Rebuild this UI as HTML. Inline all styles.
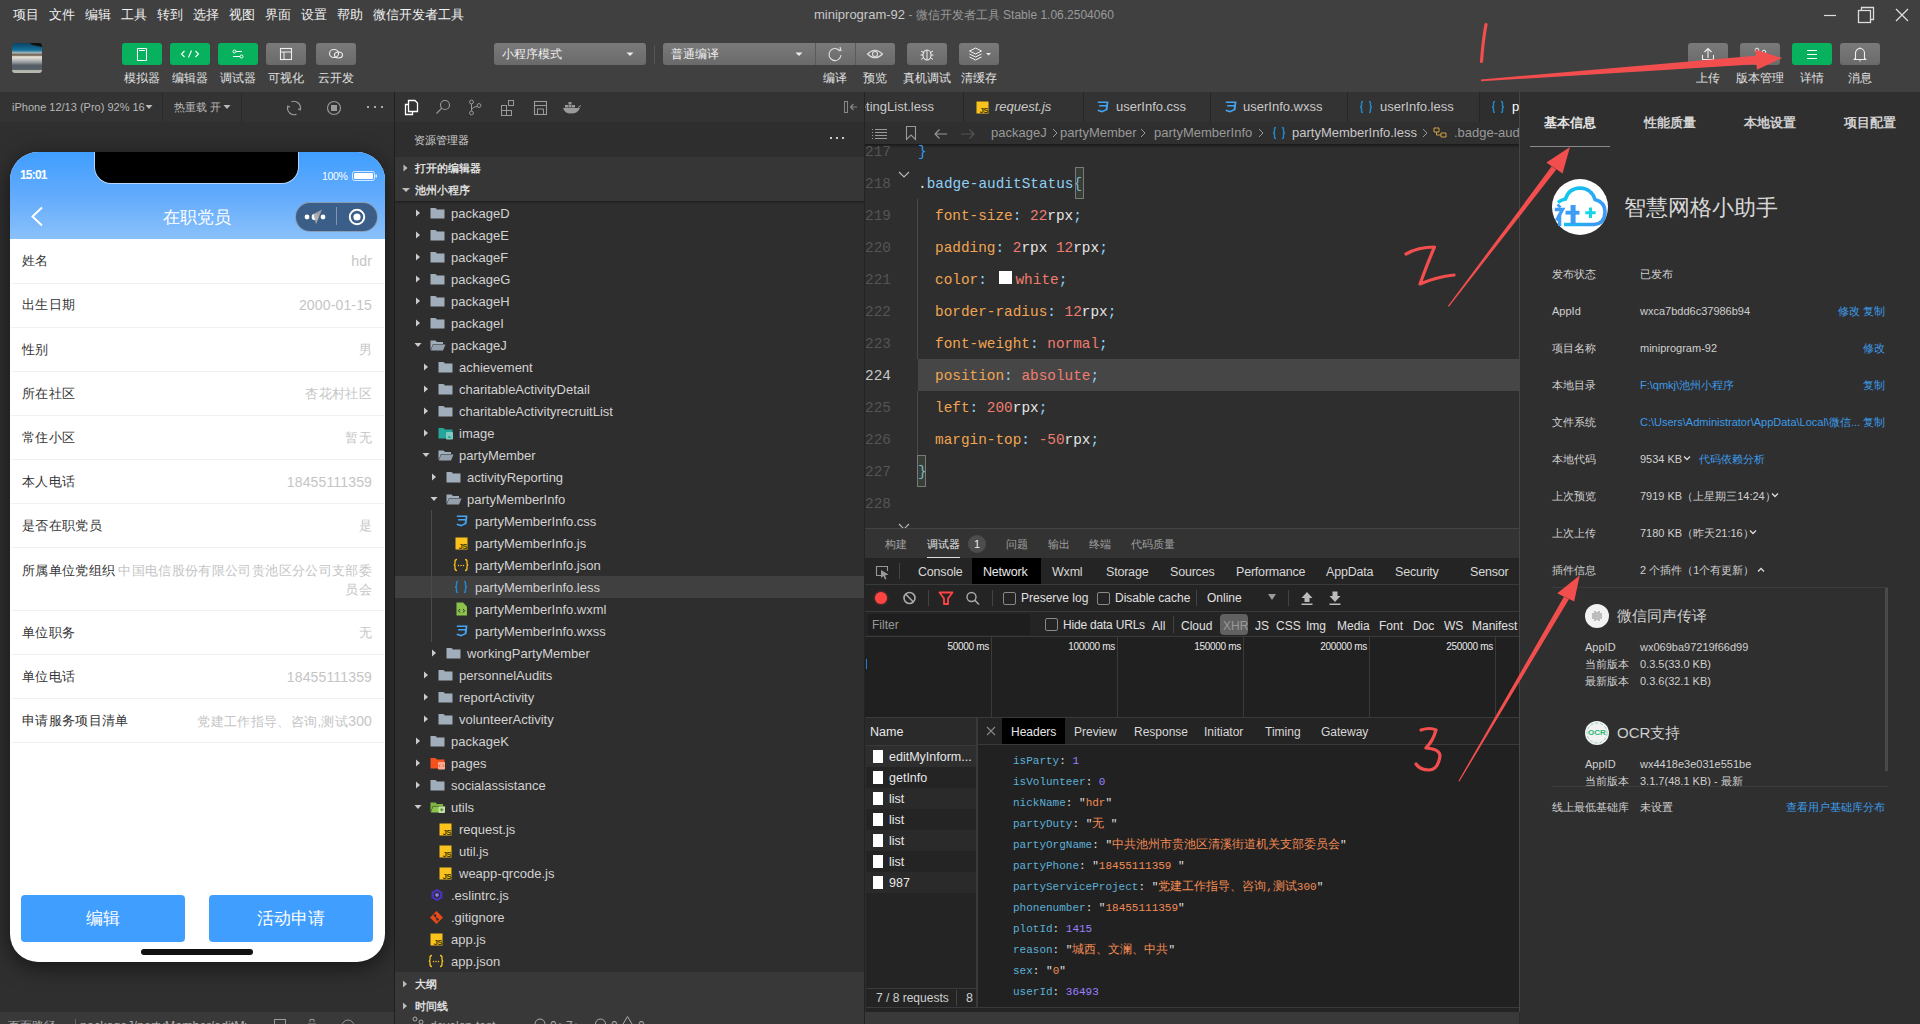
<!DOCTYPE html>
<html><head><meta charset="utf-8"><style>
html,body{margin:0;padding:0;}
body{width:1920px;height:1024px;overflow:hidden;position:relative;background:#2c2c2c;font-family:"Liberation Sans",sans-serif;}
.t{position:absolute;white-space:nowrap;}
.r{position:absolute;}
.m{font-family:"Liberation Mono",monospace;}
</style></head><body>
<div class="r" style="left:0px;top:0px;width:1920px;height:92px;background:#404040;"></div><div class="t " style="left:13px;top:5.0px;font-size:13px;line-height:20px;color:#f0f0f0;">项目</div><div class="t " style="left:49px;top:5.0px;font-size:13px;line-height:20px;color:#f0f0f0;">文件</div><div class="t " style="left:85px;top:5.0px;font-size:13px;line-height:20px;color:#f0f0f0;">编辑</div><div class="t " style="left:121px;top:5.0px;font-size:13px;line-height:20px;color:#f0f0f0;">工具</div><div class="t " style="left:157px;top:5.0px;font-size:13px;line-height:20px;color:#f0f0f0;">转到</div><div class="t " style="left:193px;top:5.0px;font-size:13px;line-height:20px;color:#f0f0f0;">选择</div><div class="t " style="left:229px;top:5.0px;font-size:13px;line-height:20px;color:#f0f0f0;">视图</div><div class="t " style="left:265px;top:5.0px;font-size:13px;line-height:20px;color:#f0f0f0;">界面</div><div class="t " style="left:301px;top:5.0px;font-size:13px;line-height:20px;color:#f0f0f0;">设置</div><div class="t " style="left:337px;top:5.0px;font-size:13px;line-height:20px;color:#f0f0f0;">帮助</div><div class="t " style="left:373px;top:5.0px;font-size:13px;line-height:20px;color:#f0f0f0;">微信开发者工具</div><div class="t " style="left:814px;top:5.0px;font-size:12px;line-height:20px;color:#9a9a9a;font-size:12px;"><span style="color:#c8c8c8;font-size:13px">miniprogram-92</span> - 微信开发者工具 Stable 1.06.2504060</div><svg class="r" style="left:1820px;top:5px;" width="100" height="22" viewBox="0 0 100 22"><line x1="4" y1="10.5" x2="16" y2="10.5" stroke="#ddd" stroke-width="1.2"/><rect x="38.5" y="5.5" width="12" height="12" fill="none" stroke="#ddd" stroke-width="1.3"/><path d="M41.5 5.5V2.5H53.5V14.5H50.5" fill="none" stroke="#ddd" stroke-width="1.3"/><path d="M76 4L88 16M88 4L76 16" stroke="#ddd" stroke-width="1.3"/></svg><div class="r" style="left:12px;top:43px;width:30px;height:30px;border-radius:3px;overflow:hidden;background:linear-gradient(180deg,#0e4262 0%,#14709a 24%,#a8b8bc 33%,#7a6a5a 38%,#7a6a5a 41%,#ebe6d8 46%,#c0c0c0 56%,#8e9296 66%,#555e66 74%,#555e66 88%,#b8bab0 92%,#b8bab0 100%);"><div class="r" style="left:18px;top:-3px;width:16px;height:6px;border-radius:3px;background:#111;transform:rotate(12deg);"></div></div><div class="r" style="left:122px;top:43px;width:40px;height:22px;border-radius:3px;background:#07b15d;"></div><svg class="r" style="left:122px;top:43px;" width="40" height="22" viewBox="0 0 40 22"><rect x="15.5" y="5.5" width="9" height="12" rx="0.5" fill="none" stroke="#fff" stroke-width="1.1"/><line x1="17" y1="7.5" x2="23" y2="7.5" stroke="#fff"/></svg><div class="t " style="left:102px;top:67.5px;font-size:12px;line-height:20px;color:#e0e0e0;width:80px;text-align:center;">模拟器</div><div class="r" style="left:170px;top:43px;width:40px;height:22px;border-radius:3px;background:#07b15d;"></div><svg class="r" style="left:170px;top:43px;" width="40" height="22" viewBox="0 0 40 22"><path d="M14.5 8L11.5 11L14.5 14M25.5 8L28.5 11L25.5 14M21.5 7.5L18.5 14.5" fill="none" stroke="#fff" stroke-width="1.1"/></svg><div class="t " style="left:150px;top:67.5px;font-size:12px;line-height:20px;color:#e0e0e0;width:80px;text-align:center;">编辑器</div><div class="r" style="left:218px;top:43px;width:40px;height:22px;border-radius:3px;background:#07b15d;"></div><svg class="r" style="left:218px;top:43px;" width="40" height="22" viewBox="0 0 40 22"><circle cx="16.5" cy="8.5" r="1.5" fill="none" stroke="#fff"/><line x1="18" y1="8.5" x2="24" y2="8.5" stroke="#fff"/><circle cx="23.5" cy="13.5" r="1.5" fill="none" stroke="#fff"/><line x1="15" y1="13.5" x2="22" y2="13.5" stroke="#fff"/></svg><div class="t " style="left:198px;top:67.5px;font-size:12px;line-height:20px;color:#e0e0e0;width:80px;text-align:center;">调试器</div><div class="r" style="left:266px;top:43px;width:40px;height:22px;border-radius:3px;background:linear-gradient(#7a7a7a,#6a6a6a);"></div><svg class="r" style="left:266px;top:43px;" width="40" height="22" viewBox="0 0 40 22"><rect x="14.5" y="5.5" width="11" height="11" fill="none" stroke="#eee" stroke-width="1.1"/><line x1="14.5" y1="9" x2="25.5" y2="9" stroke="#eee"/><line x1="18" y1="9" x2="18" y2="16.5" stroke="#eee"/></svg><div class="t " style="left:246px;top:67.5px;font-size:12px;line-height:20px;color:#e0e0e0;width:80px;text-align:center;">可视化</div><div class="r" style="left:316px;top:43px;width:40px;height:22px;border-radius:3px;background:linear-gradient(#7a7a7a,#6a6a6a);"></div><svg class="r" style="left:316px;top:43px;" width="40" height="22" viewBox="0 0 40 22"><ellipse cx="18" cy="10.5" rx="4.5" ry="4" fill="none" stroke="#eee" stroke-width="1.1"/><ellipse cx="22.5" cy="12" rx="4" ry="3" fill="none" stroke="#eee" stroke-width="1.1"/></svg><div class="t " style="left:296px;top:67.5px;font-size:12px;line-height:20px;color:#e0e0e0;width:80px;text-align:center;">云开发</div><div class="r" style="left:494px;top:43px;width:152px;height:22px;border-radius:3px;background:linear-gradient(#7a7a7a,#6a6a6a);"></div><div class="t " style="left:502px;top:44.0px;font-size:12px;line-height:20px;color:#eee;">小程序模式</div><svg class="r" style="left:625px;top:50px;" width="10" height="8" viewBox="0 0 10 8"><path d="M1.5 2.5L5 6L8.5 2.5Z" fill="#eee"/></svg><div class="r" style="left:654px;top:45px;width:1px;height:19px;background:#555;"></div><div class="r" style="left:663px;top:43px;width:232px;height:22px;border-radius:3px;background:linear-gradient(#7a7a7a,#6a6a6a);"></div><div class="r" style="left:815px;top:43px;width:1px;height:22px;background:#5a5a5a;"></div><div class="r" style="left:855px;top:43px;width:1px;height:22px;background:#5a5a5a;"></div><div class="t " style="left:671px;top:44.0px;font-size:12px;line-height:20px;color:#eee;">普通编译</div><svg class="r" style="left:794px;top:50px;" width="10" height="8" viewBox="0 0 10 8"><path d="M1.5 2.5L5 6L8.5 2.5Z" fill="#eee"/></svg><svg class="r" style="left:815px;top:43px;" width="40" height="22" viewBox="0 0 40 22"><path d="M25 8.2A6 6 0 1 0 26 12" fill="none" stroke="#ddd" stroke-width="1.1"/><path d="M22.5 6.5L26 7.5L25 4" fill="none" stroke="#ddd" stroke-width="1.1"/></svg><svg class="r" style="left:855px;top:43px;" width="40" height="22" viewBox="0 0 40 22"><path d="M12.5 11Q20 3.5 27.5 11Q20 18.5 12.5 11Z" fill="none" stroke="#ddd" stroke-width="1.1"/><circle cx="20" cy="11" r="2.5" fill="none" stroke="#ddd" stroke-width="1.1"/></svg><div class="r" style="left:907px;top:43px;width:40px;height:22px;border-radius:3px;background:linear-gradient(#7a7a7a,#6a6a6a);"></div><svg class="r" style="left:907px;top:43px;" width="40" height="22" viewBox="0 0 40 22"><ellipse cx="20" cy="12" rx="4" ry="5" fill="none" stroke="#eee" stroke-width="1.1"/><path d="M14 8L16.5 9.5M26 8L23.5 9.5M13.5 12H16M24 12H26.5M14 16.5L16.5 14.5M26 16.5L23.5 14.5M20 7V17" stroke="#eee" stroke-width="1"/></svg><div class="r" style="left:959px;top:43px;width:40px;height:22px;border-radius:3px;background:linear-gradient(#7a7a7a,#6a6a6a);"></div><svg class="r" style="left:959px;top:43px;" width="40" height="22" viewBox="0 0 40 22"><path d="M10.5 8L16.5 5L22.5 8L16.5 11Z" fill="none" stroke="#eee"/><path d="M10.5 11L16.5 14L22.5 11M10.5 14L16.5 17L22.5 14" fill="none" stroke="#eee"/><path d="M27 10L29.5 12.5L32 10Z" fill="#eee"/></svg><div class="t " style="left:795px;top:67.5px;font-size:12px;line-height:20px;color:#e0e0e0;width:80px;text-align:center;">编译</div><div class="t " style="left:835px;top:67.5px;font-size:12px;line-height:20px;color:#e0e0e0;width:80px;text-align:center;">预览</div><div class="t " style="left:887px;top:67.5px;font-size:12px;line-height:20px;color:#e0e0e0;width:80px;text-align:center;">真机调试</div><div class="t " style="left:939px;top:67.5px;font-size:12px;line-height:20px;color:#e0e0e0;width:80px;text-align:center;">清缓存</div><div class="r" style="left:1688px;top:43px;width:40px;height:22px;border-radius:3px;background:linear-gradient(#7a7a7a,#6a6a6a);"></div><svg class="r" style="left:1688px;top:43px;" width="40" height="22" viewBox="0 0 40 22"><path d="M20 15V6M16.5 9L20 5.5L23.5 9" fill="none" stroke="#eee" stroke-width="1.1"/><path d="M14.5 12V16.5H25.5V12" fill="none" stroke="#eee" stroke-width="1.1"/></svg><div class="t " style="left:1668px;top:67.5px;font-size:12px;line-height:20px;color:#e0e0e0;width:80px;text-align:center;">上传</div><div class="r" style="left:1740px;top:43px;width:40px;height:22px;border-radius:3px;background:linear-gradient(#7a7a7a,#6a6a6a);"></div><svg class="r" style="left:1740px;top:43px;" width="40" height="22" viewBox="0 0 40 22"><circle cx="17" cy="7" r="1.8" fill="none" stroke="#eee"/><circle cx="24" cy="9" r="1.8" fill="none" stroke="#eee"/><circle cx="17" cy="15.5" r="1.8" fill="none" stroke="#eee"/><path d="M17 8.8V13.7M17 12.5Q18 10.5 22.5 10" fill="none" stroke="#eee"/></svg><div class="t " style="left:1720px;top:67.5px;font-size:12px;line-height:20px;color:#e0e0e0;width:80px;text-align:center;">版本管理</div><div class="r" style="left:1792px;top:43px;width:40px;height:22px;border-radius:3px;background:#07b15d;"></div><svg class="r" style="left:1792px;top:43px;" width="40" height="22" viewBox="0 0 40 22"><path d="M15 7.5H25M15 11.5H25M15 15.5H25" stroke="#fff" stroke-width="1.1"/></svg><div class="t " style="left:1772px;top:67.5px;font-size:12px;line-height:20px;color:#e0e0e0;width:80px;text-align:center;">详情</div><div class="r" style="left:1840px;top:43px;width:40px;height:22px;border-radius:3px;background:linear-gradient(#7a7a7a,#6a6a6a);"></div><svg class="r" style="left:1840px;top:43px;" width="40" height="22" viewBox="0 0 40 22"><path d="M15.5 15.5V10A4.5 4.5 0 0 1 24.5 10V15.5L26 16.5H14Z" fill="none" stroke="#eee" stroke-width="1.1" stroke-linejoin="round"/><path d="M19.5 18H20.5" stroke="#eee" stroke-width="1.3"/><path d="M20 4.5V5.5" stroke="#eee" stroke-width="1.3"/></svg><div class="t " style="left:1820px;top:67.5px;font-size:12px;line-height:20px;color:#e0e0e0;width:80px;text-align:center;">消息</div><div class="r" style="left:0px;top:92px;width:394px;height:30px;background:#333333;"></div><div class="r" style="left:0px;top:122px;width:394px;height:890px;background:#2f2f2f;"></div><div class="r" style="left:394px;top:92px;width:1px;height:932px;background:#1f1f1f;"></div><div class="t " style="left:12px;top:97.0px;font-size:11px;line-height:20px;color:#b8b8b8;">iPhone 12/13 (Pro) 92% 16</div><svg class="r" style="left:145px;top:104px;" width="8" height="6" viewBox="0 0 8 6"><path d="M0.5 1L4 5L7.5 1Z" fill="#bbb"/></svg><div class="r" style="left:162px;top:92px;width:1px;height:30px;background:#2a2a2a;"></div><div class="t " style="left:174px;top:97.0px;font-size:11px;line-height:20px;color:#b8b8b8;">热重载 开</div><svg class="r" style="left:223px;top:104px;" width="8" height="6" viewBox="0 0 8 6"><path d="M0.5 1L4 5L7.5 1Z" fill="#bbb"/></svg><div class="r" style="left:241px;top:92px;width:1px;height:30px;background:#2a2a2a;"></div><svg class="r" style="left:284px;top:98px;" width="20" height="20" viewBox="0 0 20 20"><path d="M7.5 3.8A6.5 6.5 0 0 1 16.2 11.5M12.5 16.2A6.5 6.5 0 0 1 3.8 8.5" fill="none" stroke="#999" stroke-width="1.2"/><path d="M16.8 9.5L16.2 12L14 10.8" fill="none" stroke="#999" stroke-width="1.1"/><path d="M3.2 10.5L3.8 8L6 9.2" fill="none" stroke="#999" stroke-width="1.1"/></svg><svg class="r" style="left:324px;top:98px;" width="20" height="20" viewBox="0 0 20 20"><circle cx="10" cy="10" r="6.5" fill="none" stroke="#999" stroke-width="1.2"/><rect x="7" y="7" width="6" height="6" fill="#999"/></svg><svg class="r" style="left:364px;top:103px;" width="22" height="8" viewBox="0 0 22 8"><rect x="3" y="3" width="2" height="2" fill="#aaa"/><rect x="10" y="3" width="2" height="2" fill="#aaa"/><rect x="17" y="3" width="2" height="2" fill="#aaa"/></svg><div class="r" style="left:0px;top:1012px;width:394px;height:12px;background:#393939;"></div><div class="t " style="left:8px;top:1016.0px;font-size:12px;line-height:20px;color:#aaa;">页面路径</div><div class="r" style="left:75px;top:1019px;width:1px;height:6px;background:#666;"></div><div class="r" style="left:78px;top:1012px;width:170px;height:12px;overflow:hidden;"><div class="t" style="left:2px;top:4px;font-size:12.5px;line-height:20px;color:#aaa;">packageJ/partyMember/editMyInformation</div></div><div class="r" style="left:10px;top:152px;width:375px;height:810px;border-radius:28px;background:#fff;overflow:hidden;box-shadow:0 5px 22px rgba(0,0,0,0.55);"><div class="r" style="left:0;top:0;width:375px;height:87px;background:linear-gradient(180deg,#409eff 0%,#62abfc 50%,#8ac1fa 100%);"></div><div class="r" style="left:85px;top:-1px;width:203px;height:32px;background:#000;border-radius:0 0 16px 16px;box-shadow:0 0 0 1px rgba(255,255,255,0.55);"></div></div><div class="t " style="left:20px;top:164.5px;font-size:12px;line-height:20px;color:#fff;font-weight:bold;letter-spacing:-0.8px;">15:01</div><div class="t " style="left:322px;top:165.5px;font-size:10.5px;line-height:20px;color:#fff;letter-spacing:-0.3px;">100%</div><svg class="r" style="left:351px;top:170px;" width="28" height="12" viewBox="0 0 28 12"><rect x="1.5" y="1.5" width="22" height="9" rx="2" fill="none" stroke="rgba(255,255,255,0.75)" stroke-width="1"/><rect x="3" y="3" width="19" height="6" rx="1" fill="#fff"/><rect x="24.5" y="4.5" width="1.5" height="3" fill="rgba(255,255,255,0.8)"/></svg><svg class="r" style="left:28px;top:205px;" width="20" height="24" viewBox="0 0 20 24"><path d="M14 2.5L4.5 11.5L14 20.5" fill="none" stroke="#fff" stroke-width="2"/></svg><div class="t " style="left:110px;top:207.5px;font-size:17px;line-height:20px;color:#fff;width:173px;text-align:center;">在职党员</div><div class="r" style="left:294.5px;top:201.5px;width:81px;height:28.5px;border-radius:15px;background:#3a5e87;border:1px solid rgba(200,210,220,0.55);"></div><div class="r" style="left:335.5px;top:207px;width:1px;height:18px;background:rgba(255,255,255,0.35);"></div><svg class="r" style="left:300px;top:208px;" width="36" height="18" viewBox="0 0 36 18"><circle cx="7" cy="9" r="2.4" fill="#fff"/><circle cx="15" cy="9" r="3.3" fill="#fff"/><circle cx="23" cy="9" r="2.4" fill="#fff"/><path d="M22 1.5L13.5 6L16 16.5Z" fill="#a9a9a9" opacity="0.9"/></svg><svg class="r" style="left:347px;top:207px;" width="20" height="20" viewBox="0 0 20 20"><circle cx="10" cy="10" r="7.2" fill="none" stroke="#fff" stroke-width="2"/><circle cx="10" cy="10" r="3.6" fill="#fff"/></svg><div class="t " style="left:22px;top:251.0px;font-size:13.4px;line-height:20px;color:#333;letter-spacing:0.35px;">姓名</div><div class="t " style="right:1548px;top:251.0px;font-size:13.4px;line-height:20px;color:#c5c5c5;letter-spacing:0.35px;"><span style="font-size:14px;letter-spacing:0.15px">h</span><span style="font-size:14px;letter-spacing:0.15px">d</span><span style="font-size:14px;letter-spacing:0.15px">r</span></div><div class="r" style="left:11px;top:283px;width:373px;height:1px;background:#f1f1f1;"></div><div class="t " style="left:22px;top:295.0px;font-size:13.4px;line-height:20px;color:#333;letter-spacing:0.35px;">出生日期</div><div class="t " style="right:1548px;top:295.0px;font-size:13.4px;line-height:20px;color:#c5c5c5;letter-spacing:0.35px;"><span style="font-size:14px;letter-spacing:0.15px">2</span><span style="font-size:14px;letter-spacing:0.15px">0</span><span style="font-size:14px;letter-spacing:0.15px">0</span><span style="font-size:14px;letter-spacing:0.15px">0</span><span style="font-size:14px;letter-spacing:0.15px">-</span><span style="font-size:14px;letter-spacing:0.15px">0</span><span style="font-size:14px;letter-spacing:0.15px">1</span><span style="font-size:14px;letter-spacing:0.15px">-</span><span style="font-size:14px;letter-spacing:0.15px">1</span><span style="font-size:14px;letter-spacing:0.15px">5</span></div><div class="r" style="left:11px;top:327px;width:373px;height:1px;background:#f1f1f1;"></div><div class="t " style="left:22px;top:339.5px;font-size:13.4px;line-height:20px;color:#333;letter-spacing:0.35px;">性别</div><div class="t " style="right:1548px;top:339.5px;font-size:13.4px;line-height:20px;color:#c5c5c5;letter-spacing:0.35px;">男</div><div class="r" style="left:11px;top:371px;width:373px;height:1px;background:#f1f1f1;"></div><div class="t " style="left:22px;top:383.5px;font-size:13.4px;line-height:20px;color:#333;letter-spacing:0.35px;">所在社区</div><div class="t " style="right:1548px;top:383.5px;font-size:13.4px;line-height:20px;color:#c5c5c5;letter-spacing:0.35px;">杏花村社区</div><div class="r" style="left:11px;top:415px;width:373px;height:1px;background:#f1f1f1;"></div><div class="t " style="left:22px;top:427.5px;font-size:13.4px;line-height:20px;color:#333;letter-spacing:0.35px;">常住小区</div><div class="t " style="right:1548px;top:427.5px;font-size:13.4px;line-height:20px;color:#c5c5c5;letter-spacing:0.35px;">暂无</div><div class="r" style="left:11px;top:459px;width:373px;height:1px;background:#f1f1f1;"></div><div class="t " style="left:22px;top:471.5px;font-size:13.4px;line-height:20px;color:#333;letter-spacing:0.35px;">本人电话</div><div class="t " style="right:1548px;top:471.5px;font-size:13.4px;line-height:20px;color:#c5c5c5;letter-spacing:0.35px;"><span style="font-size:14px;letter-spacing:0.15px">1</span><span style="font-size:14px;letter-spacing:0.15px">8</span><span style="font-size:14px;letter-spacing:0.15px">4</span><span style="font-size:14px;letter-spacing:0.15px">5</span><span style="font-size:14px;letter-spacing:0.15px">5</span><span style="font-size:14px;letter-spacing:0.15px">1</span><span style="font-size:14px;letter-spacing:0.15px">1</span><span style="font-size:14px;letter-spacing:0.15px">1</span><span style="font-size:14px;letter-spacing:0.15px">3</span><span style="font-size:14px;letter-spacing:0.15px">5</span><span style="font-size:14px;letter-spacing:0.15px">9</span></div><div class="r" style="left:11px;top:503px;width:373px;height:1px;background:#f1f1f1;"></div><div class="t " style="left:22px;top:515.5px;font-size:13.4px;line-height:20px;color:#333;letter-spacing:0.35px;">是否在职党员</div><div class="t " style="right:1548px;top:515.5px;font-size:13.4px;line-height:20px;color:#c5c5c5;letter-spacing:0.35px;">是</div><div class="r" style="left:11px;top:547px;width:373px;height:1px;background:#f1f1f1;"></div><div class="t " style="left:22px;top:560.5px;font-size:13.4px;line-height:20px;color:#333;letter-spacing:0.35px;">所属单位党组织</div><div class="t " style="right:1548px;top:560.5px;font-size:13.4px;line-height:20px;color:#c5c5c5;letter-spacing:0.35px;">中国电信股份有限公司贵池区分公司支部委</div><div class="t " style="right:1548px;top:579.5px;font-size:13.4px;line-height:20px;color:#c5c5c5;letter-spacing:0.35px;">员会</div><div class="r" style="left:11px;top:610px;width:373px;height:1px;background:#f1f1f1;"></div><div class="t " style="left:22px;top:622.5px;font-size:13.4px;line-height:20px;color:#333;letter-spacing:0.35px;">单位职务</div><div class="t " style="right:1548px;top:622.5px;font-size:13.4px;line-height:20px;color:#c5c5c5;letter-spacing:0.35px;">无</div><div class="r" style="left:11px;top:654px;width:373px;height:1px;background:#f1f1f1;"></div><div class="t " style="left:22px;top:666.5px;font-size:13.4px;line-height:20px;color:#333;letter-spacing:0.35px;">单位电话</div><div class="t " style="right:1548px;top:666.5px;font-size:13.4px;line-height:20px;color:#c5c5c5;letter-spacing:0.35px;"><span style="font-size:14px;letter-spacing:0.15px">1</span><span style="font-size:14px;letter-spacing:0.15px">8</span><span style="font-size:14px;letter-spacing:0.15px">4</span><span style="font-size:14px;letter-spacing:0.15px">5</span><span style="font-size:14px;letter-spacing:0.15px">5</span><span style="font-size:14px;letter-spacing:0.15px">1</span><span style="font-size:14px;letter-spacing:0.15px">1</span><span style="font-size:14px;letter-spacing:0.15px">1</span><span style="font-size:14px;letter-spacing:0.15px">3</span><span style="font-size:14px;letter-spacing:0.15px">5</span><span style="font-size:14px;letter-spacing:0.15px">9</span></div><div class="r" style="left:11px;top:698px;width:373px;height:1px;background:#f1f1f1;"></div><div class="t " style="left:22px;top:710.5px;font-size:13.4px;line-height:20px;color:#333;letter-spacing:0.35px;">申请服务项目清单</div><div class="t " style="right:1548px;top:710.5px;font-size:13.4px;line-height:20px;color:#c5c5c5;letter-spacing:0.35px;">党建工作指导、咨询,测试<span style="font-size:14px;letter-spacing:0.15px">3</span><span style="font-size:14px;letter-spacing:0.15px">0</span><span style="font-size:14px;letter-spacing:0.15px">0</span></div><div class="r" style="left:11px;top:742px;width:373px;height:1px;background:#f1f1f1;"></div><div class="r" style="left:21px;top:895px;width:164px;height:47px;border-radius:4px;background:#409eff;"></div><div class="r" style="left:208.5px;top:895px;width:164px;height:47px;border-radius:4px;background:#409eff;"></div><div class="t " style="left:21px;top:908.5px;font-size:17px;line-height:20px;color:#fff;width:164px;text-align:center;">编辑</div><div class="t " style="left:208.5px;top:908.5px;font-size:17px;line-height:20px;color:#fff;width:164px;text-align:center;">活动申请</div><div class="r" style="left:141px;top:949px;width:112px;height:5.5px;background:#111;border-radius:3px;"></div><div class="r" style="left:395px;top:92px;width:470px;height:30px;background:#333333;"></div><div class="r" style="left:395px;top:122px;width:470px;height:890px;background:#2e2e2e;"></div><div class="r" style="left:864px;top:92px;width:1px;height:932px;background:#232323;"></div><svg class="r" style="left:400px;top:94.5px;" width="190" height="24" viewBox="0 0 190 24"><path d="M8.5 5.5H15L17.5 8V16.5H8.5Z" fill="none" stroke="#fff" stroke-width="1.3"/><path d="M8.5 9.5H5.5V19.5H12.5V16.5" fill="none" stroke="#fff" stroke-width="1.3"/><circle cx="45" cy="10" r="4.5" fill="none" stroke="#9a9a9a" stroke-width="1.1"/><path d="M41.8 13.2L36.5 18.5" stroke="#9a9a9a" stroke-width="1.1"/><circle cx="71.5" cy="7" r="1.9" fill="none" stroke="#9a9a9a"/><circle cx="71.5" cy="18" r="1.9" fill="none" stroke="#9a9a9a"/><circle cx="79" cy="10.5" r="1.9" fill="none" stroke="#9a9a9a"/><path d="M71.5 9V16M71.5 15Q72 12 77.5 11.5" fill="none" stroke="#9a9a9a"/><rect x="101.5" y="10.5" width="5" height="5" fill="none" stroke="#9a9a9a"/><rect x="101.5" y="15.5" width="5" height="5" fill="none" stroke="#9a9a9a"/><rect x="106.5" y="15.5" width="5" height="5" fill="none" stroke="#9a9a9a"/><rect x="108.5" y="5.5" width="5" height="5" fill="none" stroke="#9a9a9a"/><rect x="134.5" y="6.5" width="12" height="13" fill="none" stroke="#9a9a9a" stroke-width="1.1"/><path d="M134.5 10.5H146.5M137.5 13.5V19.5M137.5 14H143.5V19.5" fill="none" stroke="#9a9a9a"/><path d="M163 13H180Q178 18.5 171 18.5Q164.5 18.5 163 13Z" fill="#9a9a9a"/><rect x="165" y="10" width="3" height="2.5" fill="#9a9a9a"/><rect x="168.5" y="10" width="3" height="2.5" fill="#9a9a9a"/><rect x="172" y="10" width="3" height="2.5" fill="#9a9a9a"/><rect x="168.5" y="7" width="3" height="2.5" fill="#9a9a9a"/><path d="M178 12.5L181 10.5" stroke="#9a9a9a"/></svg><svg class="r" style="left:843px;top:98px;" width="16" height="18" viewBox="0 0 16 18"><rect x="1.5" y="3.5" width="3" height="11" fill="none" stroke="#888"/><path d="M14 9H8M10.5 6L7.5 9L10.5 12" fill="none" stroke="#888" stroke-width="1.2"/></svg><div class="t " style="left:414px;top:130.0px;font-size:11px;line-height:20px;color:#d0d0d0;">资源管理器</div><svg class="r" style="left:828px;top:134px;" width="22" height="8" viewBox="0 0 22 8"><rect x="2" y="3" width="2" height="2" fill="#ccc"/><rect x="8" y="3" width="2" height="2" fill="#ccc"/><rect x="14" y="3" width="2" height="2" fill="#ccc"/></svg><div class="r" style="left:395px;top:157px;width:469px;height:44px;background:#363636;"></div><svg class="r" style="left:400px;top:162px;" width="12" height="12" viewBox="0 0 12 12"><path d="M3.5 2.5L7.5 6L3.5 9.5Z" fill="#bbb"/></svg><div class="t " style="left:415px;top:158.0px;font-size:11px;line-height:20px;color:#ddd;font-weight:bold;">打开的编辑器</div><svg class="r" style="left:400px;top:184px;" width="12" height="12" viewBox="0 0 12 12"><path d="M2 4L6 8L10 4Z" fill="#bbb"/></svg><div class="t " style="left:415px;top:179.5px;font-size:11px;line-height:20px;color:#ddd;font-weight:bold;">池州小程序</div><div class="r" style="left:395px;top:201px;width:469px;height:3px;background:linear-gradient(#1e1e1e,rgba(0,0,0,0));"></div><div class="r" style="left:395px;top:576px;width:469px;height:22px;background:#404040;"></div><div class="r" style="left:431px;top:510px;width:1px;height:132px;background:#4a4a4a;"></div><svg class="r" style="left:413px;top:208px" width="10" height="10" viewBox="0 0 10 10"><path d="M3 1.5L7 5L3 8.5Z" fill="#ccc"/></svg><svg class="r" style="left:430px;top:207px" width="16" height="13" viewBox="0 0 16 13"><path d="M0.5 1H5.5L7 2.5H14.5V11.5H0.5Z" fill="#a0aebb"/></svg><div class="t " style="left:451px;top:203.8px;font-size:13px;line-height:20px;color:#d2d2d2;">packageD</div><svg class="r" style="left:413px;top:230px" width="10" height="10" viewBox="0 0 10 10"><path d="M3 1.5L7 5L3 8.5Z" fill="#ccc"/></svg><svg class="r" style="left:430px;top:229px" width="16" height="13" viewBox="0 0 16 13"><path d="M0.5 1H5.5L7 2.5H14.5V11.5H0.5Z" fill="#a0aebb"/></svg><div class="t " style="left:451px;top:225.8px;font-size:13px;line-height:20px;color:#d2d2d2;">packageE</div><svg class="r" style="left:413px;top:252px" width="10" height="10" viewBox="0 0 10 10"><path d="M3 1.5L7 5L3 8.5Z" fill="#ccc"/></svg><svg class="r" style="left:430px;top:251px" width="16" height="13" viewBox="0 0 16 13"><path d="M0.5 1H5.5L7 2.5H14.5V11.5H0.5Z" fill="#a0aebb"/></svg><div class="t " style="left:451px;top:247.8px;font-size:13px;line-height:20px;color:#d2d2d2;">packageF</div><svg class="r" style="left:413px;top:274px" width="10" height="10" viewBox="0 0 10 10"><path d="M3 1.5L7 5L3 8.5Z" fill="#ccc"/></svg><svg class="r" style="left:430px;top:273px" width="16" height="13" viewBox="0 0 16 13"><path d="M0.5 1H5.5L7 2.5H14.5V11.5H0.5Z" fill="#a0aebb"/></svg><div class="t " style="left:451px;top:269.8px;font-size:13px;line-height:20px;color:#d2d2d2;">packageG</div><svg class="r" style="left:413px;top:296px" width="10" height="10" viewBox="0 0 10 10"><path d="M3 1.5L7 5L3 8.5Z" fill="#ccc"/></svg><svg class="r" style="left:430px;top:295px" width="16" height="13" viewBox="0 0 16 13"><path d="M0.5 1H5.5L7 2.5H14.5V11.5H0.5Z" fill="#a0aebb"/></svg><div class="t " style="left:451px;top:291.8px;font-size:13px;line-height:20px;color:#d2d2d2;">packageH</div><svg class="r" style="left:413px;top:318px" width="10" height="10" viewBox="0 0 10 10"><path d="M3 1.5L7 5L3 8.5Z" fill="#ccc"/></svg><svg class="r" style="left:430px;top:317px" width="16" height="13" viewBox="0 0 16 13"><path d="M0.5 1H5.5L7 2.5H14.5V11.5H0.5Z" fill="#a0aebb"/></svg><div class="t " style="left:451px;top:313.8px;font-size:13px;line-height:20px;color:#d2d2d2;">packageI</div><svg class="r" style="left:413px;top:340px" width="10" height="10" viewBox="0 0 10 10"><path d="M1.5 3L5 7L8.5 3Z" fill="#ccc"/></svg><svg class="r" style="left:430px;top:339px" width="16" height="13" viewBox="0 0 16 13"><path d="M0.5 1.5H5.5L7 3H13V5H3L0.5 11Z" fill="#a0aebb"/><path d="M3.2 5.5H15.5L13 11.5H0.8Z" fill="#a0aebb" opacity="0.9"/></svg><div class="t " style="left:451px;top:335.8px;font-size:13px;line-height:20px;color:#d2d2d2;">packageJ</div><svg class="r" style="left:421px;top:362px" width="10" height="10" viewBox="0 0 10 10"><path d="M3 1.5L7 5L3 8.5Z" fill="#ccc"/></svg><svg class="r" style="left:438px;top:361px" width="16" height="13" viewBox="0 0 16 13"><path d="M0.5 1H5.5L7 2.5H14.5V11.5H0.5Z" fill="#a0aebb"/></svg><div class="t " style="left:459px;top:357.8px;font-size:13px;line-height:20px;color:#d2d2d2;">achievement</div><svg class="r" style="left:421px;top:384px" width="10" height="10" viewBox="0 0 10 10"><path d="M3 1.5L7 5L3 8.5Z" fill="#ccc"/></svg><svg class="r" style="left:438px;top:383px" width="16" height="13" viewBox="0 0 16 13"><path d="M0.5 1H5.5L7 2.5H14.5V11.5H0.5Z" fill="#a0aebb"/></svg><div class="t " style="left:459px;top:379.8px;font-size:13px;line-height:20px;color:#d2d2d2;">charitableActivityDetail</div><svg class="r" style="left:421px;top:406px" width="10" height="10" viewBox="0 0 10 10"><path d="M3 1.5L7 5L3 8.5Z" fill="#ccc"/></svg><svg class="r" style="left:438px;top:405px" width="16" height="13" viewBox="0 0 16 13"><path d="M0.5 1H5.5L7 2.5H14.5V11.5H0.5Z" fill="#a0aebb"/></svg><div class="t " style="left:459px;top:401.8px;font-size:13px;line-height:20px;color:#d2d2d2;">charitableActivityrecruitList</div><svg class="r" style="left:421px;top:428px" width="10" height="10" viewBox="0 0 10 10"><path d="M3 1.5L7 5L3 8.5Z" fill="#ccc"/></svg><svg class="r" style="left:438px;top:427px" width="16" height="13" viewBox="0 0 16 13"><path d="M0.5 1H5.5L7 2.5H14.5V11.5H0.5Z" fill="#26a69a"/><rect x="8" y="5" width="7" height="7.5" rx="1" fill="#80cbc4"/><path d="M9.5 11L11 8.5L13.5 11Z" fill="#26a69a"/></svg><div class="t " style="left:459px;top:423.8px;font-size:13px;line-height:20px;color:#d2d2d2;">image</div><svg class="r" style="left:421px;top:450px" width="10" height="10" viewBox="0 0 10 10"><path d="M1.5 3L5 7L8.5 3Z" fill="#ccc"/></svg><svg class="r" style="left:438px;top:449px" width="16" height="13" viewBox="0 0 16 13"><path d="M0.5 1.5H5.5L7 3H13V5H3L0.5 11Z" fill="#a0aebb"/><path d="M3.2 5.5H15.5L13 11.5H0.8Z" fill="#a0aebb" opacity="0.9"/></svg><div class="t " style="left:459px;top:445.8px;font-size:13px;line-height:20px;color:#d2d2d2;">partyMember</div><svg class="r" style="left:429px;top:472px" width="10" height="10" viewBox="0 0 10 10"><path d="M3 1.5L7 5L3 8.5Z" fill="#ccc"/></svg><svg class="r" style="left:446px;top:471px" width="16" height="13" viewBox="0 0 16 13"><path d="M0.5 1H5.5L7 2.5H14.5V11.5H0.5Z" fill="#a0aebb"/></svg><div class="t " style="left:467px;top:467.8px;font-size:13px;line-height:20px;color:#d2d2d2;">activityReporting</div><svg class="r" style="left:429px;top:494px" width="10" height="10" viewBox="0 0 10 10"><path d="M1.5 3L5 7L8.5 3Z" fill="#ccc"/></svg><svg class="r" style="left:446px;top:493px" width="16" height="13" viewBox="0 0 16 13"><path d="M0.5 1.5H5.5L7 3H13V5H3L0.5 11Z" fill="#a0aebb"/><path d="M3.2 5.5H15.5L13 11.5H0.8Z" fill="#a0aebb" opacity="0.9"/></svg><div class="t " style="left:467px;top:489.8px;font-size:13px;line-height:20px;color:#d2d2d2;">partyMemberInfo</div><svg class="r" style="left:455px;top:514px" width="14" height="14" viewBox="0 0 14 14"><path d="M2 1.5H12.5L11.5 10L6 12.5L1.5 11L2 9.5L6 10.8L9.6 9.2L10 6.5H3L3.3 5H10.3L10.6 3H1.7Z" fill="#42a5f5"/></svg><div class="t " style="left:475px;top:511.79999999999995px;font-size:13px;line-height:20px;color:#d2d2d2;">partyMemberInfo.css</div><svg class="r" style="left:455px;top:537px" width="13" height="13" viewBox="0 0 13 13"><rect x="0.5" y="0.5" width="12" height="12" fill="#f9c21c"/><text x="11.8" y="11.6" font-size="7.5" font-family="Liberation Sans" font-weight="bold" text-anchor="end" fill="#3a3000" letter-spacing="-0.6">JS</text></svg><div class="t " style="left:475px;top:533.8px;font-size:13px;line-height:20px;color:#d2d2d2;">partyMemberInfo.js</div><svg class="r" style="left:453px;top:558px" width="16" height="14" viewBox="0 0 16 14"><path d="M4 1.5Q2 1.5 2 3.5V5.5Q2 7 0.8 7Q2 7 2 8.5V10.5Q2 12.5 4 12.5M12 1.5Q14 1.5 14 3.5V5.5Q14 7 15.2 7Q14 7 14 8.5V10.5Q14 12.5 12 12.5" fill="none" stroke="#f9c21c" stroke-width="1.3"/><circle cx="5.5" cy="7.5" r="0.75" fill="#f9c21c"/><circle cx="8" cy="7.5" r="0.75" fill="#f9c21c"/><circle cx="10.5" cy="7.5" r="0.75" fill="#f9c21c"/></svg><div class="t " style="left:475px;top:555.8px;font-size:13px;line-height:20px;color:#d2d2d2;">partyMemberInfo.json</div><svg class="r" style="left:454px;top:580px" width="14" height="14" viewBox="0 0 14 14"><path d="M4 1.5Q2.5 1.5 2.5 3V5.5Q2.5 7 1 7Q2.5 7 2.5 8.5V11Q2.5 12.5 4 12.5M10 1.5Q11.5 1.5 11.5 3V5.5Q11.5 7 13 7Q11.5 7 11.5 8.5V11Q11.5 12.5 10 12.5" fill="none" stroke="#1f8ad2" stroke-width="1.4"/></svg><div class="t " style="left:475px;top:577.8px;font-size:13px;line-height:20px;color:#d2d2d2;">partyMemberInfo.less</div><svg class="r" style="left:455px;top:602px" width="13" height="14" viewBox="0 0 13 14"><path d="M1.5 0.5H8L12 4.5V13.5H1.5Z" fill="#8bc34a"/><path d="M5 7L3.5 8.8L5 10.6M8 7L9.5 8.8L8 10.6" fill="none" stroke="#2c2c2c" stroke-width="1"/></svg><div class="t " style="left:475px;top:599.8px;font-size:13px;line-height:20px;color:#d2d2d2;">partyMemberInfo.wxml</div><svg class="r" style="left:455px;top:624px" width="14" height="14" viewBox="0 0 14 14"><path d="M2 1.5H12.5L11.5 10L6 12.5L1.5 11L2 9.5L6 10.8L9.6 9.2L10 6.5H3L3.3 5H10.3L10.6 3H1.7Z" fill="#42a5f5"/></svg><div class="t " style="left:475px;top:621.8px;font-size:13px;line-height:20px;color:#d2d2d2;">partyMemberInfo.wxss</div><svg class="r" style="left:429px;top:648px" width="10" height="10" viewBox="0 0 10 10"><path d="M3 1.5L7 5L3 8.5Z" fill="#ccc"/></svg><svg class="r" style="left:446px;top:647px" width="16" height="13" viewBox="0 0 16 13"><path d="M0.5 1H5.5L7 2.5H14.5V11.5H0.5Z" fill="#a0aebb"/></svg><div class="t " style="left:467px;top:643.8px;font-size:13px;line-height:20px;color:#d2d2d2;">workingPartyMember</div><svg class="r" style="left:421px;top:670px" width="10" height="10" viewBox="0 0 10 10"><path d="M3 1.5L7 5L3 8.5Z" fill="#ccc"/></svg><svg class="r" style="left:438px;top:669px" width="16" height="13" viewBox="0 0 16 13"><path d="M0.5 1H5.5L7 2.5H14.5V11.5H0.5Z" fill="#a0aebb"/></svg><div class="t " style="left:459px;top:665.8px;font-size:13px;line-height:20px;color:#d2d2d2;">personnelAudits</div><svg class="r" style="left:421px;top:692px" width="10" height="10" viewBox="0 0 10 10"><path d="M3 1.5L7 5L3 8.5Z" fill="#ccc"/></svg><svg class="r" style="left:438px;top:691px" width="16" height="13" viewBox="0 0 16 13"><path d="M0.5 1H5.5L7 2.5H14.5V11.5H0.5Z" fill="#a0aebb"/></svg><div class="t " style="left:459px;top:687.8px;font-size:13px;line-height:20px;color:#d2d2d2;">reportActivity</div><svg class="r" style="left:421px;top:714px" width="10" height="10" viewBox="0 0 10 10"><path d="M3 1.5L7 5L3 8.5Z" fill="#ccc"/></svg><svg class="r" style="left:438px;top:713px" width="16" height="13" viewBox="0 0 16 13"><path d="M0.5 1H5.5L7 2.5H14.5V11.5H0.5Z" fill="#a0aebb"/></svg><div class="t " style="left:459px;top:709.8px;font-size:13px;line-height:20px;color:#d2d2d2;">volunteerActivity</div><svg class="r" style="left:413px;top:736px" width="10" height="10" viewBox="0 0 10 10"><path d="M3 1.5L7 5L3 8.5Z" fill="#ccc"/></svg><svg class="r" style="left:430px;top:735px" width="16" height="13" viewBox="0 0 16 13"><path d="M0.5 1H5.5L7 2.5H14.5V11.5H0.5Z" fill="#a0aebb"/></svg><div class="t " style="left:451px;top:731.8px;font-size:13px;line-height:20px;color:#d2d2d2;">packageK</div><svg class="r" style="left:413px;top:758px" width="10" height="10" viewBox="0 0 10 10"><path d="M3 1.5L7 5L3 8.5Z" fill="#ccc"/></svg><svg class="r" style="left:430px;top:757px" width="16" height="13" viewBox="0 0 16 13"><path d="M0.5 1H5.5L7 2.5H14.5V11.5H0.5Z" fill="#f4511e"/><rect x="8" y="5" width="7" height="7.5" rx="1" fill="#ffab91"/><path d="M10.3 7.3L9 8.7L10.3 10M12.7 7.3L14 8.7L12.7 10" fill="none" stroke="#d84315" stroke-width="0.8"/></svg><div class="t " style="left:451px;top:753.8px;font-size:13px;line-height:20px;color:#d2d2d2;">pages</div><svg class="r" style="left:413px;top:780px" width="10" height="10" viewBox="0 0 10 10"><path d="M3 1.5L7 5L3 8.5Z" fill="#ccc"/></svg><svg class="r" style="left:430px;top:779px" width="16" height="13" viewBox="0 0 16 13"><path d="M0.5 1H5.5L7 2.5H14.5V11.5H0.5Z" fill="#a0aebb"/></svg><div class="t " style="left:451px;top:775.8px;font-size:13px;line-height:20px;color:#d2d2d2;">socialassistance</div><svg class="r" style="left:413px;top:802px" width="10" height="10" viewBox="0 0 10 10"><path d="M1.5 3L5 7L8.5 3Z" fill="#ccc"/></svg><svg class="r" style="left:430px;top:801px" width="16" height="13" viewBox="0 0 16 13"><path d="M0.5 1.5H5.5L7 3H13V5H3L0.5 11Z" fill="#7cb342"/><path d="M3.2 5.5H15.5L13 11.5H0.8Z" fill="#8bc34a"/><rect x="8.5" y="5.5" width="6.5" height="6.5" rx="1" fill="#c5e1a5"/><path d="M11.75 7V10.5M10 8.75H13.5" stroke="#558b2f" stroke-width="1"/></svg><div class="t " style="left:451px;top:797.8px;font-size:13px;line-height:20px;color:#d2d2d2;">utils</div><svg class="r" style="left:439px;top:823px" width="13" height="13" viewBox="0 0 13 13"><rect x="0.5" y="0.5" width="12" height="12" fill="#f9c21c"/><text x="11.8" y="11.6" font-size="7.5" font-family="Liberation Sans" font-weight="bold" text-anchor="end" fill="#3a3000" letter-spacing="-0.6">JS</text></svg><div class="t " style="left:459px;top:819.8px;font-size:13px;line-height:20px;color:#d2d2d2;">request.js</div><svg class="r" style="left:439px;top:845px" width="13" height="13" viewBox="0 0 13 13"><rect x="0.5" y="0.5" width="12" height="12" fill="#f9c21c"/><text x="11.8" y="11.6" font-size="7.5" font-family="Liberation Sans" font-weight="bold" text-anchor="end" fill="#3a3000" letter-spacing="-0.6">JS</text></svg><div class="t " style="left:459px;top:841.8px;font-size:13px;line-height:20px;color:#d2d2d2;">util.js</div><svg class="r" style="left:439px;top:867px" width="13" height="13" viewBox="0 0 13 13"><rect x="0.5" y="0.5" width="12" height="12" fill="#f9c21c"/><text x="11.8" y="11.6" font-size="7.5" font-family="Liberation Sans" font-weight="bold" text-anchor="end" fill="#3a3000" letter-spacing="-0.6">JS</text></svg><div class="t " style="left:459px;top:863.8px;font-size:13px;line-height:20px;color:#d2d2d2;">weapp-qrcode.js</div><svg class="r" style="left:430px;top:888px" width="14" height="14" viewBox="0 0 14 14"><path d="M7 0.8L12.5 4V10L7 13.2L1.5 10V4Z" fill="#4b32c3" opacity="0.9"/><path d="M7 3.5L10 5.2V8.8L7 10.5L4 8.8V5.2Z" fill="#2c2c2c"/><path d="M7 5L8.7 6V8L7 9L5.3 8V6Z" fill="#8080f2"/></svg><div class="t " style="left:451px;top:885.8px;font-size:13px;line-height:20px;color:#d2d2d2;">.eslintrc.js</div><svg class="r" style="left:429px;top:910px" width="15" height="15" viewBox="0 0 15 15"><path d="M7.5 1L14 7.5L7.5 14L1 7.5Z" fill="#e64a19"/><circle cx="6" cy="5.5" r="1.2" fill="#2c2c2c"/><circle cx="8.5" cy="9.5" r="1.2" fill="#2c2c2c"/><path d="M5 4.5L8.5 9.5" stroke="#2c2c2c"/></svg><div class="t " style="left:451px;top:907.8px;font-size:13px;line-height:20px;color:#d2d2d2;">.gitignore</div><svg class="r" style="left:430px;top:933px" width="13" height="13" viewBox="0 0 13 13"><rect x="0.5" y="0.5" width="12" height="12" fill="#f9c21c"/><text x="11.8" y="11.6" font-size="7.5" font-family="Liberation Sans" font-weight="bold" text-anchor="end" fill="#3a3000" letter-spacing="-0.6">JS</text></svg><div class="t " style="left:451px;top:929.8px;font-size:13px;line-height:20px;color:#d2d2d2;">app.js</div><svg class="r" style="left:428px;top:954px" width="16" height="14" viewBox="0 0 16 14"><path d="M4 1.5Q2 1.5 2 3.5V5.5Q2 7 0.8 7Q2 7 2 8.5V10.5Q2 12.5 4 12.5M12 1.5Q14 1.5 14 3.5V5.5Q14 7 15.2 7Q14 7 14 8.5V10.5Q14 12.5 12 12.5" fill="none" stroke="#f9c21c" stroke-width="1.3"/><circle cx="5.5" cy="7.5" r="0.75" fill="#f9c21c"/><circle cx="8" cy="7.5" r="0.75" fill="#f9c21c"/><circle cx="10.5" cy="7.5" r="0.75" fill="#f9c21c"/></svg><div class="t " style="left:451px;top:951.8px;font-size:13px;line-height:20px;color:#d2d2d2;">app.json</div><div class="r" style="left:395px;top:972px;width:469px;height:52px;background:#383838;"></div><svg class="r" style="left:400px;top:979px;" width="10" height="10" viewBox="0 0 10 10"><path d="M3 1.5L7 5L3 8.5Z" fill="#bbb"/></svg><div class="t " style="left:415px;top:974.0px;font-size:11px;line-height:20px;color:#ddd;font-weight:bold;">大纲</div><svg class="r" style="left:400px;top:1001px;" width="10" height="10" viewBox="0 0 10 10"><path d="M3 1.5L7 5L3 8.5Z" fill="#bbb"/></svg><div class="t " style="left:415px;top:996.0px;font-size:11px;line-height:20px;color:#ddd;font-weight:bold;">时间线</div><div class="r" style="left:865px;top:92px;width:654px;height:30px;background:#333333;"></div><div class="r" style="left:865px;top:122px;width:654px;height:22px;background:#2f2f2f;"></div><div class="r" style="left:865px;top:144px;width:654px;height:384px;background:#2e2e2e;"></div><div class="r" style="left:865px;top:144px;width:654px;height:4px;background:linear-gradient(rgba(0,0,0,0.45),rgba(0,0,0,0));"></div><div class="r" style="left:963px;top:92px;width:1px;height:30px;background:#262626;"></div><div class="r" style="left:1083px;top:92px;width:1px;height:30px;background:#262626;"></div><div class="r" style="left:1210px;top:92px;width:1px;height:30px;background:#262626;"></div><div class="r" style="left:1347px;top:92px;width:1px;height:30px;background:#262626;"></div><div class="r" style="left:1479px;top:92px;width:1px;height:30px;background:#262626;"></div><div class="r" style="left:1480px;top:92px;width:39px;height:30px;background:#2e2e2e;"></div><div class="r" style="left:865px;top:92px;width:98px;height:30px;overflow:hidden;"><div class="t" style="right:29px;top:5px;font-size:13px;line-height:20px;color:#c8c8c8;">meetingList.less</div></div><svg class="r" style="left:976px;top:101px" width="13" height="13" viewBox="0 0 13 13"><rect x="0.5" y="0.5" width="12" height="12" fill="#f9c21c"/><text x="11.8" y="11.6" font-size="7.5" font-family="Liberation Sans" font-weight="bold" text-anchor="end" fill="#3a3000" letter-spacing="-0.6">JS</text></svg><div class="t " style="left:995px;top:97.0px;font-size:13px;line-height:20px;color:#c8c8c8;font-style:italic;">request.js</div><svg class="r" style="left:1096px;top:100px" width="14" height="14" viewBox="0 0 14 14"><path d="M2 1.5H12.5L11.5 10L6 12.5L1.5 11L2 9.5L6 10.8L9.6 9.2L10 6.5H3L3.3 5H10.3L10.6 3H1.7Z" fill="#42a5f5"/></svg><div class="t " style="left:1116px;top:97.0px;font-size:13px;line-height:20px;color:#c8c8c8;">userInfo.css</div><svg class="r" style="left:1224px;top:100px" width="14" height="14" viewBox="0 0 14 14"><path d="M2 1.5H12.5L11.5 10L6 12.5L1.5 11L2 9.5L6 10.8L9.6 9.2L10 6.5H3L3.3 5H10.3L10.6 3H1.7Z" fill="#42a5f5"/></svg><div class="t " style="left:1243px;top:97.0px;font-size:13px;line-height:20px;color:#c8c8c8;">userInfo.wxss</div><svg class="r" style="left:1359px;top:100px" width="14" height="14" viewBox="0 0 14 14"><path d="M4 1.5Q2.5 1.5 2.5 3V5.5Q2.5 7 1 7Q2.5 7 2.5 8.5V11Q2.5 12.5 4 12.5M10 1.5Q11.5 1.5 11.5 3V5.5Q11.5 7 13 7Q11.5 7 11.5 8.5V11Q11.5 12.5 10 12.5" fill="none" stroke="#1f8ad2" stroke-width="1.4"/></svg><div class="t " style="left:1380px;top:97.0px;font-size:13px;line-height:20px;color:#c8c8c8;">userInfo.less</div><svg class="r" style="left:1491px;top:100px" width="14" height="14" viewBox="0 0 14 14"><path d="M4 1.5Q2.5 1.5 2.5 3V5.5Q2.5 7 1 7Q2.5 7 2.5 8.5V11Q2.5 12.5 4 12.5M10 1.5Q11.5 1.5 11.5 3V5.5Q11.5 7 13 7Q11.5 7 11.5 8.5V11Q11.5 12.5 10 12.5" fill="none" stroke="#1f8ad2" stroke-width="1.4"/></svg><div class="r" style="left:1508px;top:92px;width:11px;height:30px;overflow:hidden;"><div class="t" style="left:4px;top:5px;font-size:13px;line-height:20px;color:#fff;">partyMemberInfo.less</div></div><svg class="r" style="left:868px;top:124px;" width="120" height="20" viewBox="0 0 120 20"><path d="M7 5.5H19M7 8.5H19M7 11.5H19M7 14.5H19" stroke="#9a9a9a" stroke-width="1"/><path d="M4 5.5H5M4 8.5H5M4 11.5H5M4 14.5H5" stroke="#9a9a9a"/><path d="M38.5 2.5H47.5V15.5L43 11L38.5 15.5Z" fill="none" stroke="#9a9a9a" stroke-width="1.1"/><path d="M67 10H79M71.5 5.5L67 10L71.5 14.5" fill="none" stroke="#9a9a9a" stroke-width="1.1"/><path d="M93 10H106M101.5 5.5L106 10L101.5 14.5" fill="none" stroke="#555" stroke-width="1.1"/></svg><div class="t " style="left:991px;top:123.0px;font-size:13px;line-height:20px;color:#999;">packageJ</div><svg class="r" style="left:1050px;top:127px;" width="10" height="12" viewBox="0 0 10 12"><path d="M3 2L7 6L3 10" fill="none" stroke="#999" stroke-width="1"/></svg><div class="t " style="left:1060px;top:123.0px;font-size:13px;line-height:20px;color:#999;">partyMember</div><svg class="r" style="left:1138px;top:127px;" width="10" height="12" viewBox="0 0 10 12"><path d="M3 2L7 6L3 10" fill="none" stroke="#999" stroke-width="1"/></svg><div class="t " style="left:1154px;top:123.0px;font-size:13px;line-height:20px;color:#999;">partyMemberInfo</div><svg class="r" style="left:1256px;top:127px;" width="10" height="12" viewBox="0 0 10 12"><path d="M3 2L7 6L3 10" fill="none" stroke="#999" stroke-width="1"/></svg><svg class="r" style="left:1272px;top:126px" width="14" height="14" viewBox="0 0 14 14"><path d="M4 1.5Q2.5 1.5 2.5 3V5.5Q2.5 7 1 7Q2.5 7 2.5 8.5V11Q2.5 12.5 4 12.5M10 1.5Q11.5 1.5 11.5 3V5.5Q11.5 7 13 7Q11.5 7 11.5 8.5V11Q11.5 12.5 10 12.5" fill="none" stroke="#1f8ad2" stroke-width="1.4"/></svg><div class="t " style="left:1292px;top:123.0px;font-size:13px;line-height:20px;color:#c8c8c8;">partyMemberInfo.less</div><svg class="r" style="left:1420px;top:127px;" width="10" height="12" viewBox="0 0 10 12"><path d="M3 2L7 6L3 10" fill="none" stroke="#999" stroke-width="1"/></svg><svg class="r" style="left:1432px;top:125px;" width="18" height="16" viewBox="0 0 18 16"><path d="M2 3H7V7H2Z M9 8H14V12H9Z" fill="none" stroke="#d1a045" stroke-width="1"/><path d="M4.5 7V10H9" fill="none" stroke="#d1a045"/></svg><div class="r" style="left:1454px;top:122px;width:65px;height:22px;overflow:hidden;"><div class="t" style="left:0;top:1px;font-size:13px;line-height:20px;color:#999;">.badge-auditStatus</div></div><div class="r" style="left:918px;top:359px;width:601px;height:32px;background:#464646;"></div><div class="t m" style="left:865px;top:142.0px;font-size:14.4px;line-height:20px;color:#545454;">217</div><div class="t m" style="left:865px;top:174.0px;font-size:14.4px;line-height:20px;color:#545454;">218</div><div class="t m" style="left:865px;top:206.0px;font-size:14.4px;line-height:20px;color:#545454;">219</div><div class="t m" style="left:865px;top:238.0px;font-size:14.4px;line-height:20px;color:#545454;">220</div><div class="t m" style="left:865px;top:270.0px;font-size:14.4px;line-height:20px;color:#545454;">221</div><div class="t m" style="left:865px;top:302.0px;font-size:14.4px;line-height:20px;color:#545454;">222</div><div class="t m" style="left:865px;top:334.0px;font-size:14.4px;line-height:20px;color:#545454;">223</div><div class="t m" style="left:865px;top:366.0px;font-size:14.4px;line-height:20px;color:#c8c8c8;">224</div><div class="t m" style="left:865px;top:398.0px;font-size:14.4px;line-height:20px;color:#545454;">225</div><div class="t m" style="left:865px;top:430.0px;font-size:14.4px;line-height:20px;color:#545454;">226</div><div class="t m" style="left:865px;top:462.0px;font-size:14.4px;line-height:20px;color:#545454;">227</div><div class="t m" style="left:865px;top:494.0px;font-size:14.4px;line-height:20px;color:#545454;">228</div><div class="t m" style="left:918px;top:142.0px;font-size:14.4px;line-height:20px;color:#ddd;white-space:pre;"><span style="color:#2f9ef5">}</span></div><svg class="r" style="left:897px;top:170px;" width="14" height="10" viewBox="0 0 14 10"><path d="M2 2L7 7L12 2" fill="none" stroke="#bbb" stroke-width="1.1"/></svg><div class="t m" style="left:918px;top:174.0px;font-size:14.4px;line-height:20px;color:#ddd;white-space:pre;"><span style="color:#ddd">.</span><span style="color:#8fd0f5">badge-auditStatus</span><span style="color:#8fd0f5">{</span></div><div class="r" style="left:1075px;top:167px;width:7px;height:30px;border:1px solid #7a7a7a;background:rgba(80,110,80,0.25);"></div><div class="r" style="left:917px;top:199px;width:1px;height:160px;background:#4a4a4a;"></div><div class="r" style="left:917px;top:391px;width:1px;height:64px;background:#4a4a4a;"></div><div class="t m" style="left:935px;top:206.0px;font-size:14.4px;line-height:20px;color:#ddd;white-space:pre;"><span style="color:#f0a552">font-size</span><span style="color:#8fd4fb">: </span><span style="color:#ef7d6f">22</span><span style="color:#e4e4e4">rpx</span><span style="color:#8fd4fb">;</span></div><div class="t m" style="left:935px;top:238.0px;font-size:14.4px;line-height:20px;color:#ddd;white-space:pre;"><span style="color:#f0a552">padding</span><span style="color:#8fd4fb">: </span><span style="color:#ef7d6f">2</span><span style="color:#e4e4e4">rpx </span><span style="color:#ef7d6f">12</span><span style="color:#e4e4e4">rpx</span><span style="color:#8fd4fb">;</span></div><div class="t m" style="left:935px;top:270.0px;font-size:14.4px;line-height:20px;color:#ddd;white-space:pre;"><span style="color:#f0a552">color</span><span style="color:#8fd4fb">: </span><span style="color:#e4e4e4"><span style="display:inline-block;width:20px"></span></span><span style="color:#ef7d6f">white</span><span style="color:#8fd4fb">;</span></div><div class="r" style="left:999px;top:271px;width:13px;height:13px;background:#fff;"></div><div class="t m" style="left:935px;top:302.0px;font-size:14.4px;line-height:20px;color:#ddd;white-space:pre;"><span style="color:#f0a552">border-radius</span><span style="color:#8fd4fb">: </span><span style="color:#ef7d6f">12</span><span style="color:#e4e4e4">rpx</span><span style="color:#8fd4fb">;</span></div><div class="t m" style="left:935px;top:334.0px;font-size:14.4px;line-height:20px;color:#ddd;white-space:pre;"><span style="color:#f0a552">font-weight</span><span style="color:#8fd4fb">: </span><span style="color:#ef7d6f">normal</span><span style="color:#8fd4fb">;</span></div><div class="t m" style="left:935px;top:366.0px;font-size:14.4px;line-height:20px;color:#ddd;white-space:pre;"><span style="color:#f0a552">position</span><span style="color:#8fd4fb">: </span><span style="color:#ef7d6f">absolute</span><span style="color:#8fd4fb">;</span></div><div class="t m" style="left:935px;top:398.0px;font-size:14.4px;line-height:20px;color:#ddd;white-space:pre;"><span style="color:#f0a552">left</span><span style="color:#8fd4fb">: </span><span style="color:#ef7d6f">200</span><span style="color:#e4e4e4">rpx</span><span style="color:#8fd4fb">;</span></div><div class="t m" style="left:935px;top:430.0px;font-size:14.4px;line-height:20px;color:#ddd;white-space:pre;"><span style="color:#f0a552">margin-top</span><span style="color:#8fd4fb">: </span><span style="color:#ef7d6f">-50</span><span style="color:#e4e4e4">rpx</span><span style="color:#8fd4fb">;</span></div><div class="t m" style="left:918px;top:462.0px;font-size:14.4px;line-height:20px;color:#ddd;white-space:pre;"><span style="color:#8fd0f5">}</span></div><div class="r" style="left:917px;top:455px;width:7px;height:30px;border:1px solid #7a7a7a;background:rgba(80,110,80,0.25);"></div><svg class="r" style="left:897px;top:523px;" width="14" height="5" viewBox="0 0 14 5"><path d="M2 1L7 6L12 1" fill="none" stroke="#bbb" stroke-width="1.1"/></svg><div class="r" style="left:865px;top:528px;width:654px;height:1px;background:#444;"></div><div class="r" style="left:865px;top:529px;width:654px;height:29px;background:#333333;"></div><div class="t " style="left:885px;top:533.5px;font-size:11px;line-height:20px;color:#a0a0a0;">构建</div><div class="t " style="left:927px;top:533.5px;font-size:11px;line-height:20px;color:#e8e8e8;">调试器</div><div class="t " style="left:1006px;top:533.5px;font-size:11px;line-height:20px;color:#a0a0a0;">问题</div><div class="t " style="left:1048px;top:533.5px;font-size:11px;line-height:20px;color:#a0a0a0;">输出</div><div class="t " style="left:1089px;top:533.5px;font-size:11px;line-height:20px;color:#a0a0a0;">终端</div><div class="t " style="left:1131px;top:533.5px;font-size:11px;line-height:20px;color:#a0a0a0;">代码质量</div><div class="r" style="left:927px;top:556.5px;width:33px;height:1.5px;background:#ddd;"></div><div class="r" style="left:968px;top:535px;width:18px;height:18px;border-radius:9px;background:#4d4d4d;"></div><div class="t " style="left:968px;top:534.0px;font-size:11px;line-height:20px;color:#eee;width:18px;text-align:center;">1</div><div class="r" style="left:865px;top:558px;width:654px;height:27px;background:#242424;"></div><div class="r" style="left:972px;top:558px;width:69px;height:26px;background:#000;"></div><svg class="r" style="left:868px;top:562px;" width="40" height="20" viewBox="0 0 40 20"><path d="M14 13.5H8.5V4.5H19.5V9" fill="none" stroke="#999" stroke-width="1.1"/><path d="M13 8L20.5 12.5L17 13.5L18.5 17L17 17.5L15.5 14L13 16Z" fill="#999"/></svg><div class="r" style="left:899px;top:563px;width:1px;height:16px;background:#444;"></div><div class="t " style="left:918px;top:561.5px;font-size:12.5px;line-height:20px;color:#d8d8d8;letter-spacing:-0.2px;">Console</div><div class="t " style="left:983px;top:561.5px;font-size:12.5px;line-height:20px;color:#e8e8e8;letter-spacing:-0.2px;">Network</div><div class="t " style="left:1052px;top:561.5px;font-size:12.5px;line-height:20px;color:#d8d8d8;letter-spacing:-0.2px;">Wxml</div><div class="t " style="left:1106px;top:561.5px;font-size:12.5px;line-height:20px;color:#d8d8d8;letter-spacing:-0.2px;">Storage</div><div class="t " style="left:1170px;top:561.5px;font-size:12.5px;line-height:20px;color:#d8d8d8;letter-spacing:-0.2px;">Sources</div><div class="t " style="left:1236px;top:561.5px;font-size:12.5px;line-height:20px;color:#d8d8d8;letter-spacing:-0.2px;">Performance</div><div class="t " style="left:1326px;top:561.5px;font-size:12.5px;line-height:20px;color:#d8d8d8;letter-spacing:-0.2px;">AppData</div><div class="t " style="left:1395px;top:561.5px;font-size:12.5px;line-height:20px;color:#d8d8d8;letter-spacing:-0.2px;">Security</div><div class="t " style="left:1470px;top:561.5px;font-size:12.5px;line-height:20px;color:#d8d8d8;letter-spacing:-0.2px;">Sensor</div><div class="r" style="left:865px;top:584px;width:654px;height:1px;background:#3a3a3a;"></div><div class="r" style="left:865px;top:585px;width:654px;height:26px;background:#242424;"></div><div class="r" style="left:875px;top:592px;width:12px;height:12px;border-radius:6px;background:#f44;box-shadow:0 0 3px rgba(255,60,60,0.6);"></div><svg class="r" style="left:900px;top:589px;" width="20" height="20" viewBox="0 0 20 20"><circle cx="9.5" cy="9" r="5.5" fill="none" stroke="#aaa" stroke-width="1.6"/><path d="M5.8 5.3L13.2 12.7" stroke="#aaa" stroke-width="1.6"/></svg><div class="r" style="left:928px;top:590px;width:1px;height:16px;background:#444;"></div><svg class="r" style="left:937px;top:589px;" width="20" height="20" viewBox="0 0 20 20"><path d="M2.5 3.5H15.5L11 9.5V15H7V9.5Z" fill="none" stroke="#f44" stroke-width="1.8" stroke-linejoin="round"/></svg><svg class="r" style="left:963px;top:589px;" width="20" height="20" viewBox="0 0 20 20"><circle cx="8.5" cy="8" r="4.5" fill="none" stroke="#aaa" stroke-width="1.4"/><path d="M11.5 11L16 15.5" stroke="#aaa" stroke-width="1.6"/></svg><div class="r" style="left:992px;top:590px;width:1px;height:16px;background:#444;"></div><div class="r" style="left:1003px;top:592px;width:11px;height:11px;border:1px solid #888;border-radius:2px;"></div><div class="t " style="left:1021px;top:588.0px;font-size:12px;line-height:20px;color:#e0e0e0;">Preserve log</div><div class="r" style="left:1097px;top:592px;width:11px;height:11px;border:1px solid #888;border-radius:2px;"></div><div class="t " style="left:1115px;top:588.0px;font-size:12px;line-height:20px;color:#e0e0e0;">Disable cache</div><div class="r" style="left:1196px;top:590px;width:1px;height:16px;background:#444;"></div><div class="t " style="left:1207px;top:588.0px;font-size:12px;line-height:20px;color:#e0e0e0;">Online</div><svg class="r" style="left:1266px;top:592px;" width="12" height="10" viewBox="0 0 12 10"><path d="M2 2H10L6 8Z" fill="#999"/></svg><div class="r" style="left:1288px;top:590px;width:1px;height:16px;background:#444;"></div><svg class="r" style="left:1298px;top:589px;" width="18" height="18" viewBox="0 0 18 18"><path d="M9 3L3.5 9H6.5V13H11.5V9H14.5Z" fill="#bbb"/><rect x="3.5" y="14.5" width="11" height="1.5" fill="#bbb"/></svg><svg class="r" style="left:1326px;top:589px;" width="18" height="18" viewBox="0 0 18 18"><path d="M9 13L3.5 7H6.5V2.5H11.5V7H14.5Z" fill="#bbb"/><rect x="3.5" y="14.5" width="11" height="1.5" fill="#bbb"/></svg><div class="r" style="left:865px;top:611px;width:654px;height:1px;background:#3a3a3a;"></div><div class="r" style="left:865px;top:612px;width:654px;height:25px;background:#242424;"></div><div class="r" style="left:868px;top:614px;width:162px;height:21px;background:#1e1e1e;"></div><div class="t " style="left:872px;top:615.0px;font-size:12px;line-height:20px;color:#999;">Filter</div><div class="r" style="left:1045px;top:618px;width:11px;height:11px;border:1px solid #888;border-radius:2px;"></div><div class="t " style="left:1063px;top:614.5px;font-size:12px;line-height:20px;color:#e0e0e0;letter-spacing:-0.2px;">Hide data URLs</div><div class="t " style="left:1152px;top:615.5px;font-size:12px;line-height:20px;color:#e0e0e0;">All</div><div class="r" style="left:1173px;top:616px;width:1px;height:17px;background:#444;"></div><div class="r" style="left:1220px;top:614px;width:28px;height:21px;border-radius:4px;background:#616161;"></div><div class="t " style="left:1181px;top:615.5px;font-size:12px;line-height:20px;color:#e0e0e0;">Cloud</div><div class="t " style="left:1223px;top:615.5px;font-size:12px;line-height:20px;color:#9a9a9a;">XHR</div><div class="t " style="left:1255px;top:615.5px;font-size:12px;line-height:20px;color:#e0e0e0;">JS</div><div class="t " style="left:1276px;top:615.5px;font-size:12px;line-height:20px;color:#e0e0e0;">CSS</div><div class="t " style="left:1306px;top:615.5px;font-size:12px;line-height:20px;color:#e0e0e0;">Img</div><div class="t " style="left:1337px;top:615.5px;font-size:12px;line-height:20px;color:#e0e0e0;">Media</div><div class="t " style="left:1379px;top:615.5px;font-size:12px;line-height:20px;color:#e0e0e0;">Font</div><div class="t " style="left:1413px;top:615.5px;font-size:12px;line-height:20px;color:#e0e0e0;">Doc</div><div class="t " style="left:1444px;top:615.5px;font-size:12px;line-height:20px;color:#e0e0e0;">WS</div><div class="t " style="left:1472px;top:615.5px;font-size:12px;line-height:20px;color:#e0e0e0;">Manifest</div><div class="r" style="left:865px;top:636px;width:654px;height:1px;background:#3a3a3a;"></div><div class="r" style="left:865px;top:637px;width:654px;height:80px;background:#202020;"></div><div class="r" style="left:991px;top:637px;width:1px;height:80px;background:#3a3a3a;"></div><div class="r" style="left:1117px;top:637px;width:1px;height:80px;background:#3a3a3a;"></div><div class="r" style="left:1243px;top:637px;width:1px;height:80px;background:#3a3a3a;"></div><div class="r" style="left:1369px;top:637px;width:1px;height:80px;background:#3a3a3a;"></div><div class="r" style="left:1495px;top:637px;width:1px;height:80px;background:#3a3a3a;"></div><div class="t " style="right:931px;top:637.0px;font-size:10px;line-height:20px;color:#e8e8e8;letter-spacing:-0.3px;">50000 ms</div><div class="t " style="right:805px;top:637.0px;font-size:10px;line-height:20px;color:#e8e8e8;letter-spacing:-0.3px;">100000 ms</div><div class="t " style="right:679px;top:637.0px;font-size:10px;line-height:20px;color:#e8e8e8;letter-spacing:-0.3px;">150000 ms</div><div class="t " style="right:553px;top:637.0px;font-size:10px;line-height:20px;color:#e8e8e8;letter-spacing:-0.3px;">200000 ms</div><div class="t " style="right:427px;top:637.0px;font-size:10px;line-height:20px;color:#e8e8e8;letter-spacing:-0.3px;">250000 ms</div><div class="r" style="left:866px;top:659px;width:1px;height:10px;background:#1a7fd0;"></div><div class="r" style="left:866px;top:717px;width:653px;height:1px;background:#3a3a3a;"></div><div class="r" style="left:866px;top:718px;width:110px;height:294px;background:#242424;"></div><div class="r" style="left:866px;top:718px;width:110px;height:27px;background:#2a2a2a;"></div><div class="t " style="left:870px;top:722.0px;font-size:12.5px;line-height:20px;color:#e8e8e8;">Name</div><div class="r" style="left:866px;top:745px;width:110px;height:1px;background:#3a3a3a;"></div><div class="r" style="left:976px;top:718px;width:2px;height:294px;background:#3a3a3a;"></div><div class="r" style="left:866px;top:746px;width:110px;height:21px;background:#2e2e2e;"></div><div class="r" style="left:873px;top:750px;width:10px;height:13px;background:#fff;"></div><div class="t " style="left:889px;top:746.5px;font-size:12.5px;line-height:20px;color:#e8e8e8;">editMyInform...</div><div class="r" style="left:866px;top:767px;width:110px;height:21px;background:#242424;"></div><div class="r" style="left:873px;top:771px;width:10px;height:13px;background:#fff;"></div><div class="t " style="left:889px;top:767.5px;font-size:12.5px;line-height:20px;color:#e8e8e8;">getInfo</div><div class="r" style="left:866px;top:788px;width:110px;height:21px;background:#2a2a2a;"></div><div class="r" style="left:873px;top:792px;width:10px;height:13px;background:#fff;"></div><div class="t " style="left:889px;top:788.5px;font-size:12.5px;line-height:20px;color:#e8e8e8;">list</div><div class="r" style="left:866px;top:809px;width:110px;height:21px;background:#242424;"></div><div class="r" style="left:873px;top:813px;width:10px;height:13px;background:#fff;"></div><div class="t " style="left:889px;top:809.5px;font-size:12.5px;line-height:20px;color:#e8e8e8;">list</div><div class="r" style="left:866px;top:830px;width:110px;height:21px;background:#2a2a2a;"></div><div class="r" style="left:873px;top:834px;width:10px;height:13px;background:#fff;"></div><div class="t " style="left:889px;top:830.5px;font-size:12.5px;line-height:20px;color:#e8e8e8;">list</div><div class="r" style="left:866px;top:851px;width:110px;height:21px;background:#242424;"></div><div class="r" style="left:873px;top:855px;width:10px;height:13px;background:#fff;"></div><div class="t " style="left:889px;top:851.5px;font-size:12.5px;line-height:20px;color:#e8e8e8;">list</div><div class="r" style="left:866px;top:872px;width:110px;height:21px;background:#2a2a2a;"></div><div class="r" style="left:873px;top:876px;width:10px;height:13px;background:#fff;"></div><div class="t " style="left:889px;top:872.5px;font-size:12.5px;line-height:20px;color:#e8e8e8;">987</div><div class="r" style="left:866px;top:988px;width:110px;height:1px;background:#3a3a3a;"></div><div class="t " style="left:876px;top:988.0px;font-size:12px;line-height:20px;color:#d0d0d0;">7 / 8 requests</div><div class="r" style="left:956px;top:990px;width:1px;height:16px;background:#444;"></div><div class="t " style="left:966px;top:988.0px;font-size:12.5px;line-height:20px;color:#d0d0d0;">8</div><div class="r" style="left:978px;top:718px;width:541px;height:27px;background:#242424;"></div><div class="r" style="left:978px;top:744px;width:541px;height:1px;background:#3a3a3a;"></div><svg class="r" style="left:983px;top:723px;" width="16" height="16" viewBox="0 0 16 16"><path d="M4 4L12 12M12 4L4 12" stroke="#888" stroke-width="1.1"/></svg><div class="r" style="left:1002px;top:718px;width:63px;height:26px;background:#000;"></div><div class="t " style="left:1011px;top:721.5px;font-size:12px;line-height:20px;color:#e8e8e8;">Headers</div><div class="t " style="left:1074px;top:721.5px;font-size:12px;line-height:20px;color:#d8d8d8;">Preview</div><div class="t " style="left:1134px;top:721.5px;font-size:12px;line-height:20px;color:#d8d8d8;">Response</div><div class="t " style="left:1204px;top:721.5px;font-size:12px;line-height:20px;color:#d8d8d8;">Initiator</div><div class="t " style="left:1265px;top:721.5px;font-size:12px;line-height:20px;color:#d8d8d8;">Timing</div><div class="t " style="left:1321px;top:721.5px;font-size:12px;line-height:20px;color:#d8d8d8;">Gateway</div><div class="r" style="left:978px;top:745px;width:541px;height:267px;background:#212121;"></div><div class="t m" style="left:1013px;top:751.0px;font-size:11px;line-height:20px;color:#ddd;white-space:pre;"><span style="color:#5db0d7">isParty</span><span style="color:#e0e0e0">: </span><span style="color:#9980ff">1</span></div><div class="t m" style="left:1013px;top:772.0px;font-size:11px;line-height:20px;color:#ddd;white-space:pre;"><span style="color:#5db0d7">isVolunteer</span><span style="color:#e0e0e0">: </span><span style="color:#9980ff">0</span></div><div class="t m" style="left:1013px;top:793.0px;font-size:11px;line-height:20px;color:#ddd;white-space:pre;"><span style="color:#5db0d7">nickName</span><span style="color:#e0e0e0">: </span><span style="color:#e0e0e0">"</span><span style="color:#f28b54">hdr</span><span style="color:#e0e0e0">"</span></div><div class="t m" style="left:1013px;top:814.0px;font-size:11px;line-height:20px;color:#ddd;white-space:pre;"><span style="color:#5db0d7">partyDuty</span><span style="color:#e0e0e0">: </span><span style="color:#e0e0e0">"</span><span style="color:#f28b54"><span style="font-size:12px">无</span> </span><span style="color:#e0e0e0">"</span></div><div class="t m" style="left:1013px;top:835.0px;font-size:11px;line-height:20px;color:#ddd;white-space:pre;"><span style="color:#5db0d7">partyOrgName</span><span style="color:#e0e0e0">: </span><span style="color:#e0e0e0">"</span><span style="color:#f28b54"><span style="font-size:12px">中共池州市贵池区清溪街道机关支部委员会</span></span><span style="color:#e0e0e0">"</span></div><div class="t m" style="left:1013px;top:856.0px;font-size:11px;line-height:20px;color:#ddd;white-space:pre;"><span style="color:#5db0d7">partyPhone</span><span style="color:#e0e0e0">: </span><span style="color:#e0e0e0">"</span><span style="color:#f28b54">18455111359 </span><span style="color:#e0e0e0">"</span></div><div class="t m" style="left:1013px;top:877.0px;font-size:11px;line-height:20px;color:#ddd;white-space:pre;"><span style="color:#5db0d7">partyServiceProject</span><span style="color:#e0e0e0">: </span><span style="color:#e0e0e0">"</span><span style="color:#f28b54"><span style="font-size:12px">党建工作指导、咨询</span>,<span style="font-size:12px">测试</span>300</span><span style="color:#e0e0e0">"</span></div><div class="t m" style="left:1013px;top:898.0px;font-size:11px;line-height:20px;color:#ddd;white-space:pre;"><span style="color:#5db0d7">phonenumber</span><span style="color:#e0e0e0">: </span><span style="color:#e0e0e0">"</span><span style="color:#f28b54">18455111359</span><span style="color:#e0e0e0">"</span></div><div class="t m" style="left:1013px;top:919.0px;font-size:11px;line-height:20px;color:#ddd;white-space:pre;"><span style="color:#5db0d7">plotId</span><span style="color:#e0e0e0">: </span><span style="color:#9980ff">1415</span></div><div class="t m" style="left:1013px;top:940.0px;font-size:11px;line-height:20px;color:#ddd;white-space:pre;"><span style="color:#5db0d7">reason</span><span style="color:#e0e0e0">: </span><span style="color:#e0e0e0">"</span><span style="color:#f28b54"><span style="font-size:12px">城西、文澜、中共</span></span><span style="color:#e0e0e0">"</span></div><div class="t m" style="left:1013px;top:961.0px;font-size:11px;line-height:20px;color:#ddd;white-space:pre;"><span style="color:#5db0d7">sex</span><span style="color:#e0e0e0">: </span><span style="color:#e0e0e0">"</span><span style="color:#f28b54">0</span><span style="color:#e0e0e0">"</span></div><div class="t m" style="left:1013px;top:982.0px;font-size:11px;line-height:20px;color:#ddd;white-space:pre;"><span style="color:#5db0d7">userId</span><span style="color:#e0e0e0">: </span><span style="color:#9980ff">36493</span></div><div class="r" style="left:866px;top:1007px;width:653px;height:1px;background:#3a3a3a;"></div><div class="r" style="left:866px;top:1008px;width:653px;height:4px;background:#242424;"></div><div class="r" style="left:865px;top:1012px;width:654px;height:12px;background:#393939;"></div><div class="r" style="left:1519px;top:92px;width:1px;height:920px;background:#454545;"></div><div class="r" style="left:1520px;top:92px;width:400px;height:932px;background:#2f2f2f;"></div><div class="t " style="left:1544px;top:113.0px;font-size:13px;line-height:20px;color:#e6e6e6;font-weight:bold;">基本信息</div><div class="t " style="left:1644px;top:113.0px;font-size:13px;line-height:20px;color:#d0d0d0;font-weight:bold;">性能质量</div><div class="t " style="left:1744px;top:113.0px;font-size:13px;line-height:20px;color:#d0d0d0;font-weight:bold;">本地设置</div><div class="t " style="left:1844px;top:113.0px;font-size:13px;line-height:20px;color:#d0d0d0;font-weight:bold;">项目配置</div><div class="r" style="left:1530px;top:146px;width:80px;height:1px;background:#8a8a8a;"></div><div class="r" style="left:1552px;top:179px;width:56px;height:56px;border-radius:28px;background:#fff;overflow:hidden;"></div><svg class="r" style="left:1552px;top:179px;" width="56" height="56" viewBox="0 0 56 56"><defs><linearGradient id="lg1" x1="0" y1="0" x2="1" y2="0.3"><stop offset="0" stop-color="#08d2ea"/><stop offset="0.55" stop-color="#20b4f0"/><stop offset="1" stop-color="#3a9af5"/></linearGradient></defs><path d="M6 23.5Q9 20.8 13.5 20Q16.5 9.5 28 9Q39.5 9.5 43 20.5Q53 23 53 33Q52.5 45 42 45.5H12" fill="none" stroke="url(#lg1)" stroke-width="3.6"/><rect x="18.6" y="26" width="5" height="19" fill="#3d9cf5"/><rect x="13.5" y="31.8" width="14" height="3.8" fill="#3d9cf5"/><path d="M2.8 30.5H10.5L4.5 41.5" fill="none" stroke="#3d9cf5" stroke-width="3.4"/><path d="M7.6 35.5V47" stroke="#3d9cf5" stroke-width="3.4"/><path d="M5.5 25.5L8.5 28.5" stroke="#3d9cf5" stroke-width="2.6"/><path d="M38.5 28.5V39M33.3 33.7H43.7" stroke="#12d6e6" stroke-width="3"/></svg><div class="t " style="left:1624px;top:193.0px;font-size:22px;line-height:30px;color:#d8d8d8;">智慧网格小助手</div><div class="t " style="left:1552px;top:263.8px;font-size:11px;line-height:20px;color:#cfcfcf;">发布状态</div><div class="t " style="left:1640px;top:263.8px;font-size:11px;line-height:20px;color:#cfcfcf;">已发布</div><div class="t " style="left:1552px;top:300.8px;font-size:11px;line-height:20px;color:#cfcfcf;">AppId</div><div class="t " style="left:1640px;top:300.8px;font-size:11px;line-height:20px;color:#cfcfcf;">wxca7bdd6c37986b94</div><div class="t " style="left:1552px;top:337.8px;font-size:11px;line-height:20px;color:#cfcfcf;">项目名称</div><div class="t " style="left:1640px;top:337.8px;font-size:11px;line-height:20px;color:#cfcfcf;">miniprogram-92</div><div class="t " style="left:1552px;top:374.8px;font-size:11px;line-height:20px;color:#cfcfcf;">本地目录</div><div class="t " style="left:1640px;top:374.8px;font-size:11px;line-height:20px;color:#3d9be9;">F:\qmkj\池州小程序</div><div class="t " style="left:1552px;top:411.8px;font-size:11px;line-height:20px;color:#cfcfcf;">文件系统</div><div class="t " style="left:1640px;top:411.8px;font-size:11px;line-height:20px;color:#3d9be9;">C:\Users\Administrator\AppData\Local\微信...</div><div class="t " style="left:1552px;top:448.8px;font-size:11px;line-height:20px;color:#cfcfcf;">本地代码</div><div class="t " style="left:1640px;top:448.8px;font-size:11px;line-height:20px;color:#cfcfcf;">9534 KB</div><div class="t " style="left:1552px;top:485.8px;font-size:11px;line-height:20px;color:#cfcfcf;">上次预览</div><div class="t " style="left:1640px;top:485.8px;font-size:11px;line-height:20px;color:#cfcfcf;">7919 KB（上星期三14:24）</div><div class="t " style="left:1552px;top:522.8px;font-size:11px;line-height:20px;color:#cfcfcf;">上次上传</div><div class="t " style="left:1640px;top:522.8px;font-size:11px;line-height:20px;color:#cfcfcf;">7180 KB（昨天21:16）</div><div class="t " style="left:1552px;top:559.8px;font-size:11px;line-height:20px;color:#cfcfcf;">插件信息</div><div class="t " style="left:1640px;top:559.8px;font-size:11px;line-height:20px;color:#cfcfcf;">2 个插件（1个有更新）</div><div class="t " style="right:35px;top:300.8px;font-size:11px;line-height:20px;color:#3d9be9;">修改 复制</div><div class="t " style="right:35px;top:337.8px;font-size:11px;line-height:20px;color:#3d9be9;">修改</div><div class="t " style="right:35px;top:374.8px;font-size:11px;line-height:20px;color:#3d9be9;">复制</div><div class="t " style="right:35px;top:411.8px;font-size:11px;line-height:20px;color:#3d9be9;">复制</div><svg class="r" style="left:1682px;top:453px;" width="10" height="10" viewBox="0 0 10 10"><path d="M2 3.5L5 6.5L8 3.5" fill="none" stroke="#ddd" stroke-width="1.3"/></svg><div class="t " style="left:1699px;top:448.8px;font-size:11px;line-height:20px;color:#3d9be9;">代码依赖分析</div><svg class="r" style="left:1770px;top:490px;" width="10" height="10" viewBox="0 0 10 10"><path d="M2 3.5L5 6.5L8 3.5" fill="none" stroke="#ddd" stroke-width="1.3"/></svg><svg class="r" style="left:1748px;top:527px;" width="10" height="10" viewBox="0 0 10 10"><path d="M2 3.5L5 6.5L8 3.5" fill="none" stroke="#ddd" stroke-width="1.3"/></svg><svg class="r" style="left:1756px;top:565px;" width="10" height="10" viewBox="0 0 10 10"><path d="M2 6.5L5 3.5L8 6.5" fill="none" stroke="#ddd" stroke-width="1.3"/></svg><div class="r" style="left:1552px;top:587px;width:336px;height:1px;background:#3c3c3c;"></div><div class="r" style="left:1552px;top:588px;width:334px;height:116px;background:#2f2f2f;"></div><div class="r" style="left:1885px;top:588px;width:3px;height:183px;background:#4a4a4a;"></div><div class="r" style="left:1552px;top:786px;width:336px;height:1px;background:#3c3c3c;"></div><div class="r" style="left:1585px;top:604px;width:24px;height:24px;border-radius:12px;background:#f2f2f2;"></div><svg class="r" style="left:1585px;top:604px;" width="24" height="24" viewBox="0 0 24 24"><path d="M8 9V15M10 7V17M12 8V16M14 7V17M16 9V15" stroke="#888" stroke-width="1"/></svg><div class="t " style="left:1616.5px;top:605.0px;font-size:15px;line-height:22px;color:#cfcfcf;">微信同声传译</div><div class="t " style="left:1585px;top:638.5px;font-size:11px;line-height:17px;color:#cfcfcf;">AppID</div><div class="t " style="left:1640px;top:638.5px;font-size:11px;line-height:17px;color:#cfcfcf;">wx069ba97219f66d99</div><div class="t " style="left:1585px;top:655.5px;font-size:11px;line-height:17px;color:#cfcfcf;">当前版本</div><div class="t " style="left:1640px;top:655.5px;font-size:11px;line-height:17px;color:#cfcfcf;">0.3.5(33.0 KB)</div><div class="t " style="left:1585px;top:672.5px;font-size:11px;line-height:17px;color:#cfcfcf;">最新版本</div><div class="t " style="left:1640px;top:672.5px;font-size:11px;line-height:17px;color:#cfcfcf;">0.3.6(32.1 KB)</div><div class="r" style="left:1585px;top:721px;width:24px;height:24px;border-radius:12px;background:#f2f2f2;"></div><svg class="r" style="left:1585px;top:721px;" width="24" height="24" viewBox="0 0 24 24"><text x="12" y="14" font-size="8" font-weight="bold" fill="#2bb673" text-anchor="middle" font-family="Liberation Sans">OCR</text><circle cx="12" cy="12" r="10" fill="none" stroke="#8fd6b0" stroke-width="1" stroke-dasharray="3 2"/></svg><div class="t " style="left:1617px;top:722.0px;font-size:15px;line-height:22px;color:#cfcfcf;">OCR支持</div><div class="r" style="left:1552px;top:755px;width:333px;height:31px;overflow:hidden;"><div class="t" style="left:33px;top:0.5px;font-size:11px;line-height:17px;color:#cfcfcf;">AppID</div><div class="t" style="left:88px;top:0.5px;font-size:11px;line-height:17px;color:#cfcfcf;">wx4418e3e031e551be</div><div class="t" style="left:33px;top:17.5px;font-size:11px;line-height:17px;color:#cfcfcf;">当前版本</div><div class="t" style="left:88px;top:17.5px;font-size:11px;line-height:17px;color:#cfcfcf;">3.1.7(48.1 KB) - 最新</div></div><div class="t " style="left:1552px;top:796.5px;font-size:11px;line-height:20px;color:#cfcfcf;">线上最低基础库</div><div class="t " style="left:1640px;top:796.5px;font-size:11px;line-height:20px;color:#cfcfcf;">未设置</div><div class="t " style="right:35px;top:796.5px;font-size:11px;line-height:20px;color:#3d9be9;">查看用户基础库分布</div><svg class="r" style="left:270px;top:1016px;" width="90" height="8" viewBox="0 0 90 8"><rect x="4.5" y="3.5" width="11" height="8" fill="none" stroke="#999"/><path d="M40 6V3.5H44V6M38 8H46" fill="none" stroke="#999"/><circle cx="78" cy="10" r="6" fill="none" stroke="#999"/></svg><svg class="r" style="left:405px;top:1012px;" width="400" height="12" viewBox="0 0 400 12"><circle cx="10" cy="7" r="2" fill="none" stroke="#aaa"/><circle cx="16" cy="10" r="2" fill="none" stroke="#aaa"/><circle cx="135" cy="12" r="5" fill="none" stroke="#aaa"/><circle cx="195.5" cy="12" r="5" fill="none" stroke="#aaa"/><path d="M218 12L222.5 4.5L227 12" fill="none" stroke="#aaa"/></svg><div class="t " style="left:430px;top:1016.0px;font-size:12px;line-height:20px;color:#aaa;">develop-test</div><div class="t " style="left:550px;top:1016.0px;font-size:12px;line-height:20px;color:#aaa;">0↑ 7↓</div><div class="t " style="left:611px;top:1016.0px;font-size:12px;line-height:20px;color:#aaa;">0</div><div class="t " style="left:638px;top:1016.0px;font-size:12px;line-height:20px;color:#aaa;">0</div><svg class="r" style="left:0;top:0" width="1920" height="1024" viewBox="0 0 1920 1024"><path d="M1486 24.5Q1483 40 1481.5 61.5" fill="none" stroke="#f24e4e" stroke-width="3.2" stroke-linecap="round"/><polygon points="1481.1,81.3 1756.5,64.3 1755.3,49.4 1782.2,58.1 1756.9,69.7 1755.8,55.7 1480.9,79.5" fill="#f24e4e"/><path d="M1406 254Q1418 247 1434.5 247Q1428 262 1420 284Q1436 277 1454 275" fill="none" stroke="#f24e4e" stroke-width="3.2" stroke-linecap="round" stroke-linejoin="round"/><polygon points="1448.9,306.7 1556.3,169.5 1546.4,162.5 1570.0,147.0 1562.5,173.6 1551.9,166.1 1447.9,305.9" fill="#f24e4e"/><path d="M1421 730Q1430 727 1436 730Q1433 741 1426 748Q1440 749 1440 756Q1438 770 1429 770Q1420 770 1416 764" fill="none" stroke="#f24e4e" stroke-width="3.2" stroke-linecap="round" stroke-linejoin="round"/><polygon points="1459.4,781.6 1568.9,599.3 1557.3,593.3 1579.8,575.3 1574.2,601.6 1564.1,596.5 1458.4,781.0" fill="#f24e4e"/></svg>
</body></html>
